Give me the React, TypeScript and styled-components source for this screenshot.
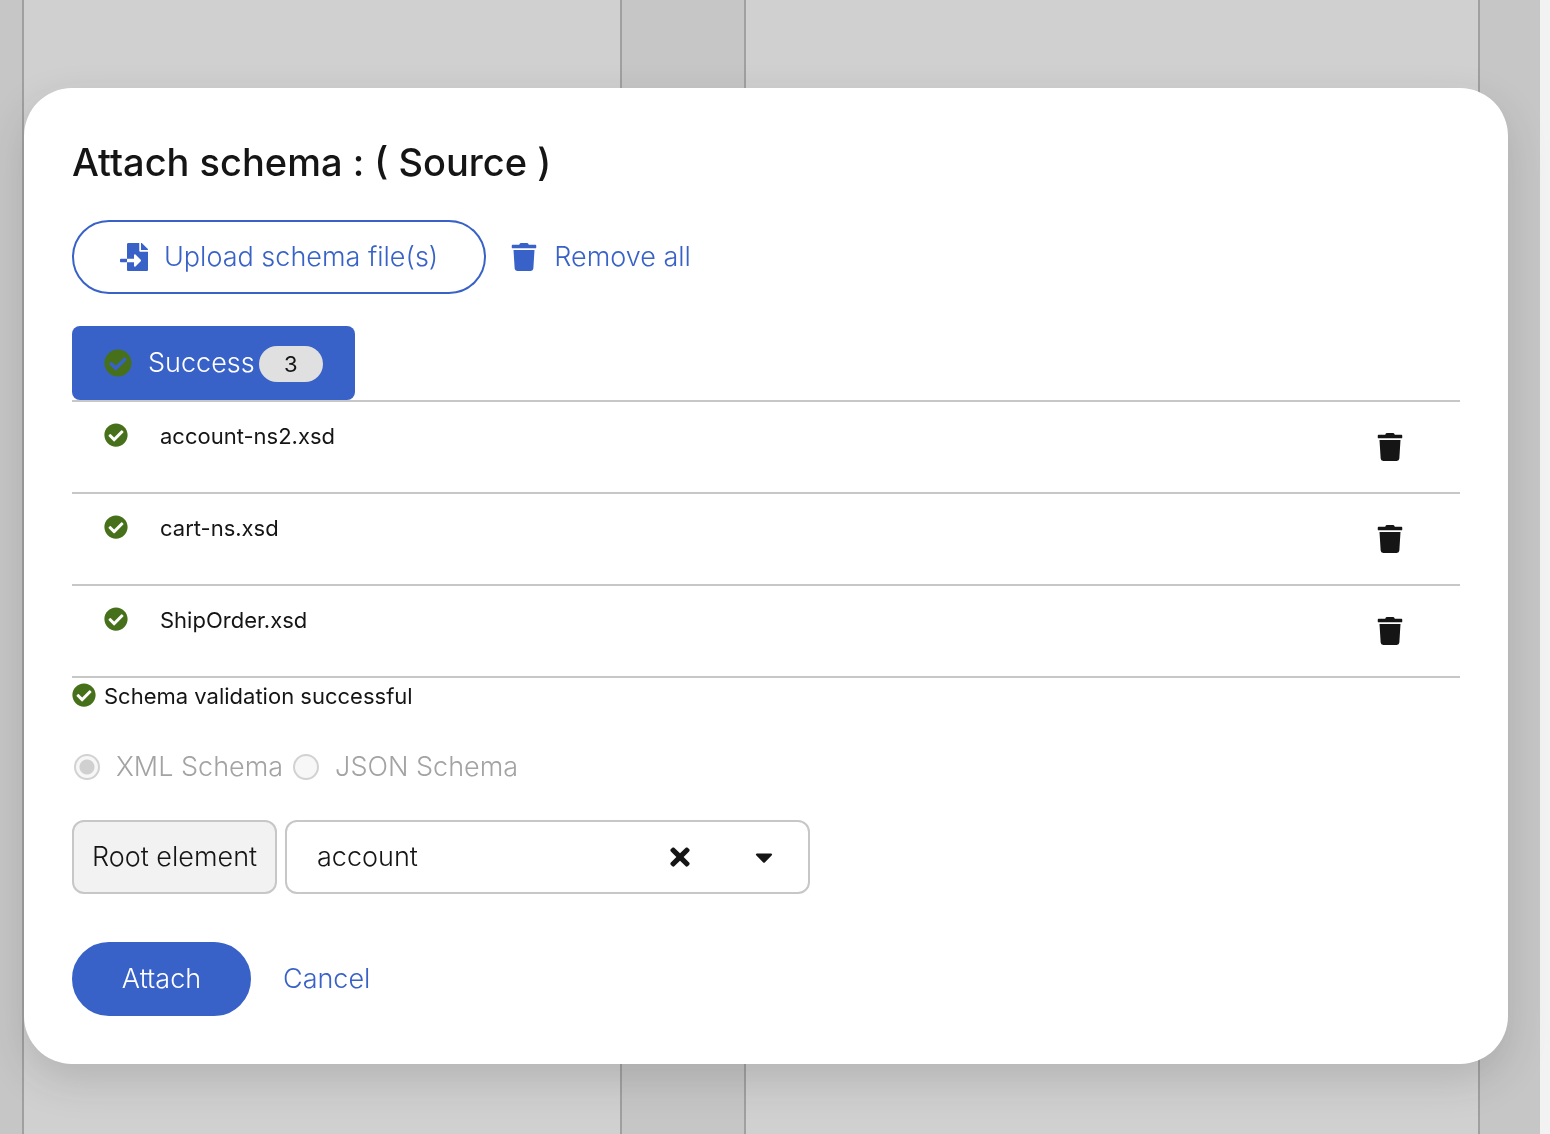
import React, { useState } from 'react';
import styled, { createGlobalStyle } from 'styled-components';
import { FaCaretDown, FaCheckCircle, FaFileImport, FaTimes, FaTrash } from 'react-icons/fa';

const color = {
  text: '#151515',
  blue: '#3962c8',
  green: '#47701b',
  line: '#c7c7c7',
  disabled: '#a3a3a3',
};

const GlobalStyle = createGlobalStyle`
  *, *::before, *::after { box-sizing: border-box; }
  body {
    margin: 0;
    color: ${color.text};
    background: #c6c6c6;
    font-family: Inter, "Open Sans", sans-serif;
    font-size: 27px;
    font-weight: 300;
    line-height: 42px;
  }
  button, input { font: inherit; color: inherit; }
  button { cursor: pointer; }
  svg { display: block; flex: none; }
`;

const Canvas = styled.div`
  display: grid;
  grid-template-columns: 600fr 122fr 736fr;
  min-height: 100vh;
  padding: 0 60px 0 22px;
  border-right: 10px solid #f2f2f2;
`;

const Panel = styled.div`
  background: #d0d0d0;
  border: solid #a0a0a0;
  border-width: 0 2px;
`;

const Backdrop = styled.div`
  position: fixed;
  inset: 0;
  display: flex;
  align-items: center;
  padding: 18px 42px 0 24px;
`;

const Dialog = styled.section`
  flex: 1;
  display: flex;
  flex-direction: column;
  padding: 48px;
  border-radius: 48px;
  background: #fff;
  box-shadow: 0 16px 40px rgba(41, 41, 41, 0.17);
`;

const Title = styled.h1`
  margin: 0 0 32px;
  font-size: 38px;
  font-weight: 500;
  line-height: 52px;
`;

const Row = styled.div<{ $gap: number; $top?: number }>`
  display: flex;
  align-items: center;
  gap: ${(p) => p.$gap}px;
  margin-top: ${(p) => p.$top ?? 0}px;
`;

const RadioRow = styled(Row)`
  padding-left: 2px;
`;

const Button = styled.button<{ $kind: 'primary' | 'secondary' | 'link' }>`
  display: flex;
  align-items: center;
  justify-content: center;
  gap: 16px;
  height: 74px;
  min-width: ${(p) => (p.$kind === 'primary' ? 179 : 0)}px;
  padding: 0 ${(p) => (p.$kind === 'link' ? 22 : 46)}px;
  border: 2px solid ${(p) => (p.$kind === 'link' ? 'transparent' : color.blue)};
  border-radius: 37px;
  color: ${(p) => (p.$kind === 'primary' ? '#fff' : color.blue)};
  background: ${(p) => (p.$kind === 'primary' ? color.blue : 'transparent')};
`;

const Tab = styled.button`
  display: flex;
  align-items: center;
  align-self: flex-start;
  gap: 16px;
  height: 74px;
  margin-top: 32px;
  padding: 0 32px;
  border: 0;
  border-radius: 8px;
  color: #fff;
  background: ${color.blue};
`;

const TabLabel = styled.span`
  display: flex;
  align-items: baseline;
  gap: 4px;
`;

const Badge = styled.span`
  min-width: 64px;
  border-radius: 18px;
  color: ${color.text};
  background: #e0e0e0;
  font-size: 22px;
  font-weight: 400;
  line-height: 36px;
  text-align: center;
`;

const FileList = styled.ul`
  margin: 0;
  padding: 0;
  border-top: 2px solid ${color.line};
  list-style: none;
`;

const FileItem = styled.li`
  display: flex;
  align-items: flex-start;
  height: 92px;
  padding: 16px 24px 0 32px;
  border-bottom: 2px solid ${color.line};
`;

const FileName = styled.span`
  flex: 1;
  font-size: 22px;
  font-weight: 400;
  line-height: 36px;
`;

const StatusIcon = styled(FaCheckCircle)<{ $space?: number }>`
  width: 24px;
  height: 24px;
  margin: 5px ${(p) => p.$space ?? 0}px 0 0;
  color: ${color.green};
`;

const PlainButton = styled.button<{ $side?: number }>`
  padding: 15px ${(p) => p.$side ?? 32}px;
  border: 0;
  background: transparent;
`;

const Validation = styled.div`
  display: flex;
  font-size: 22px;
  font-weight: 400;
  line-height: 36px;
`;

const RadioLabel = styled.label`
  display: flex;
  align-items: center;
  gap: 16px;
  color: ${color.disabled};
`;

const Radio = styled.input`
  appearance: none;
  width: 26px;
  height: 26px;
  margin: 0;
  border: 2px solid #d2d2d2;
  border-radius: 50%;
  background: #f7f7f7;

  &:checked {
    background: radial-gradient(circle, #d0d0d0 0 7px, #f7f7f7 8px);
  }
`;

const FieldLabel = styled.label`
  display: flex;
  align-items: center;
  justify-content: center;
  min-width: 205px;
  height: 74px;
  padding: 0 16px;
  border: 2px solid ${color.line};
  border-radius: 12px;
  background: #f2f2f2;
`;

const Combo = styled.div`
  display: flex;
  align-items: center;
  width: 525px;
  height: 74px;
  padding-right: 2px;
  border: 2px solid ${color.line};
  border-radius: 12px;
`;

const ComboInput = styled.input`
  flex: 1;
  min-width: 0;
  padding: 0 0 0 30px;
  border: 0;
  outline: 0;
  background: transparent;
`;

const files = ['account-ns2.xsd', 'cart-ns.xsd', 'ShipOrder.xsd'];

export default function App() {
  const [root, setRoot] = useState('account');

  return (
    <>
      <GlobalStyle />
      <Canvas>
        <Panel />
        <span />
        <Panel />
      </Canvas>
      <Backdrop>
        <Dialog role="dialog" aria-labelledby="title">
          <Title id="title">Attach schema : ( Source )</Title>
          <Row $gap={0}>
            <Button $kind="secondary">
              <FaFileImport size={28} />
              Upload schema file(s)
            </Button>
            <Button $kind="link">
              <FaTrash size={28} />
              Remove all
            </Button>
          </Row>
          <Tab>
            <FaCheckCircle size={28} color={color.green} />
            <TabLabel>
              Success
              <Badge>3</Badge>
            </TabLabel>
          </Tab>
          <FileList>
            {files.map((name) => (
              <FileItem key={name}>
                <StatusIcon $space={32} />
                <FileName>{name}</FileName>
                <PlainButton aria-label={`Remove ${name}`}>
                  <FaTrash size={28} />
                </PlainButton>
              </FileItem>
            ))}
          </FileList>
          <Validation>
            <StatusIcon $space={8} />
            Schema validation successful
          </Validation>
          <RadioRow $gap={10} $top={32}>
            <RadioLabel htmlFor="xml">
              <Radio id="xml" type="radio" name="kind" defaultChecked disabled />
              XML Schema
            </RadioLabel>
            <RadioLabel htmlFor="json">
              <Radio id="json" type="radio" name="kind" disabled />
              JSON Schema
            </RadioLabel>
          </RadioRow>
          <Row $gap={8} $top={32}>
            <FieldLabel htmlFor="root-element">Root element</FieldLabel>
            <Combo>
              <ComboInput
                id="root-element"
                type="text"
                value={root}
                onChange={(e) => setRoot(e.target.value)}
              />
              <PlainButton $side={28} aria-label="Clear" onClick={() => setRoot('')}>
                <FaTimes size={28} />
              </PlainButton>
              <PlainButton $side={28} aria-label="Show options">
                <FaCaretDown size={28} />
              </PlainButton>
            </Combo>
          </Row>
          <Row $gap={8} $top={48}>
            <Button $kind="primary">Attach</Button>
            <Button $kind="link">Cancel</Button>
          </Row>
        </Dialog>
      </Backdrop>
    </>
  );
}
